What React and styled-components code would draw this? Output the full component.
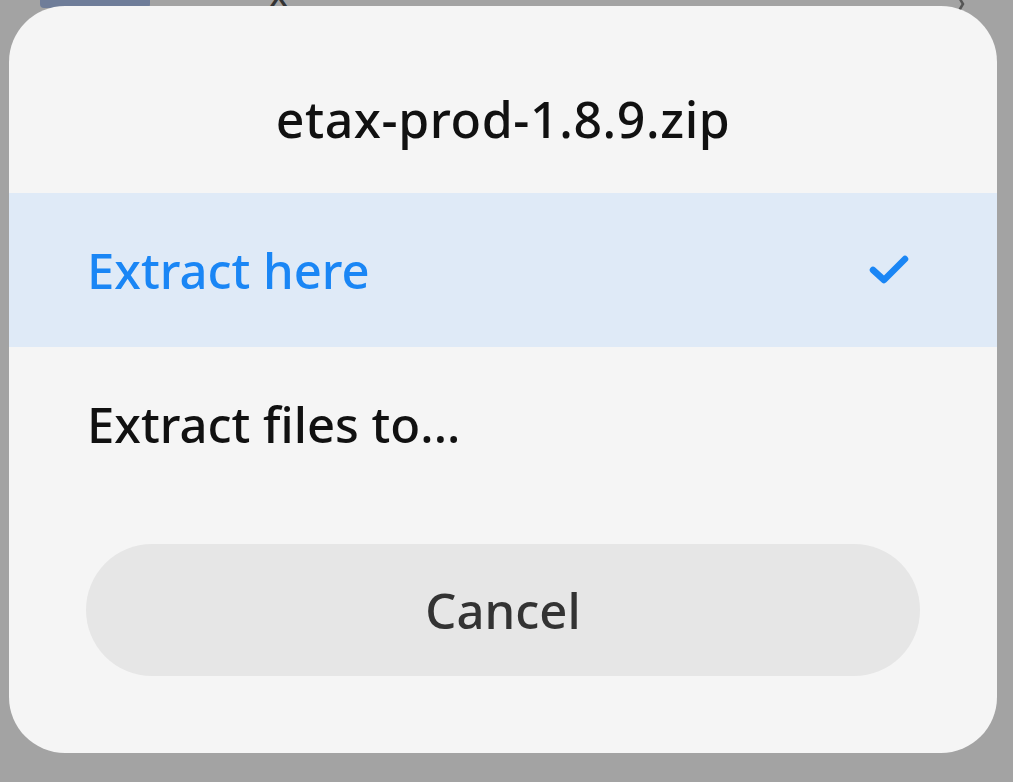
import React from "react";
import styled, { createGlobalStyle } from "styled-components";

const Global = createGlobalStyle`
  html, body { margin: 0; padding: 0; }
  body { background: #a3a3a3; font-family: "Noto Sans", "Liberation Sans", sans-serif; }
`;

const Screen = styled.div`
  position: relative;
  width: 1013px;
  height: 782px;
  overflow: hidden;
  background: #a3a3a3;
`;

const BehindRow = styled.div`
  display: flex;
  align-items: flex-start;
  height: 40px;
  margin-top: -22px;
  padding: 0 40px;
  gap: 8px;
`;

const FileThumb = styled.div`
  width: 110px;
  height: 30px;
  background: #6f7d99;
  border-radius: 4px;
`;

const BehindText = styled.div`
  font-size: 40px;
  color: #333;
  line-height: 30px;
  margin-left: 110px;
  flex: 1;
`;

const Chevron = styled.svg`
  margin-top: 16px;
  margin-right: 6px;
`;

const Dialog = styled.div`
  position: absolute;
  left: 9px;
  top: 6px;
  width: 988px;
  height: 747px;
  background: #f5f5f5;
  border-radius: 56px;
  display: flex;
  flex-direction: column;
  overflow: hidden;
`;

const Title = styled.div`
  height: 187px;
  display: flex;
  align-items: center;
  justify-content: center;
  font-size: 50px;
  font-weight: 500;
  letter-spacing: 0.6px;
  color: #111;
  padding-top: 38px;
  box-sizing: border-box;
`;

const Option = styled.div`
  height: 154px;
  display: flex;
  align-items: center;
  justify-content: space-between;
  padding: 0 85px 0 78px;
  background: ${(p) => (p.$active ? "#dfeaf7" : "transparent")};
  color: ${(p) => (p.$active ? "#1a86f5" : "#111")};
  font-size: 49px;
  font-weight: 500;
`;

const Footer = styled.div`
  flex: 1;
  padding: 43px 77px 0;
`;

const CancelButton = styled.button`
  width: 100%;
  height: 132px;
  border: none;
  border-radius: 66px;
  background: #e6e6e6;
  color: #333;
  font-family: inherit;
  font-size: 49px;
  font-weight: 500;
  cursor: pointer;
`;

export default function App() {
  return (
    <>
      <Global />
      <Screen>
        <BehindRow>
          <FileThumb />
          <BehindText>x_</BehindText>
          <Chevron width="12" height="24" viewBox="0 0 12 24">
            <path d="M2 0 L8 10 L2 20" fill="none" stroke="#555" strokeWidth="2.5" strokeLinecap="round" />
          </Chevron>
        </BehindRow>
        <Dialog>
          <Title>etax-prod-1.8.9.zip</Title>
          <Option $active>
            <span>Extract here</span>
            <svg width="46" height="34" viewBox="0 0 46 34">
              <path d="M7 17 L18 27 L39 6" fill="none" stroke="#1a86f5" strokeWidth="6.5" strokeLinecap="round" strokeLinejoin="round" />
            </svg>
          </Option>
          <Option>
            <span>Extract files to...</span>
          </Option>
          <Footer>
            <CancelButton>Cancel</CancelButton>
          </Footer>
        </Dialog>
      </Screen>
    </>
  );
}
